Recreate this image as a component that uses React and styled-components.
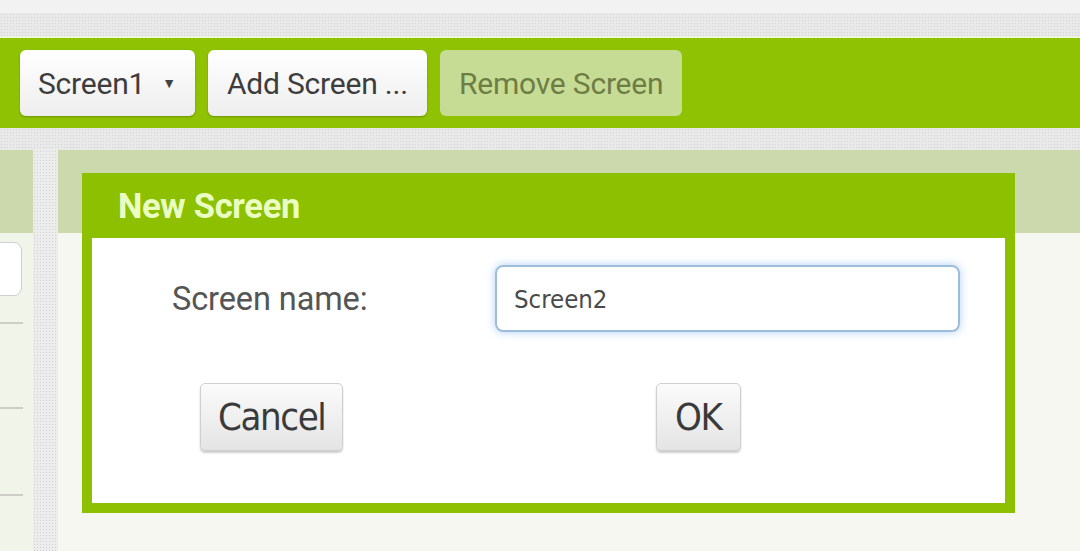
import React from 'react'
import styled, { createGlobalStyle } from 'styled-components'

const GlobalStyle = createGlobalStyle`
  html, body {
    margin: 0;
    padding: 0;
    width: 1080px;
    height: 551px;
    overflow: hidden;
    background: #f2f2f2;
    font-family: Roboto, "Noto Sans", sans-serif;
  }
`

const dots = `
  background-color: #e9e9e9;
  background-image: radial-gradient(#d2d2d2 0.8px, transparent 1px);
  background-size: 3px 3px;
`

const Page = styled.div`
  width: 1080px;
  height: 551px;
  display: flex;
  flex-direction: column;
`

const TopStrip = styled.div`
  height: 13px;
  background: #f2f2f2;
`

const DottedBand = styled.div`
  ${dots}
  height: ${({ h }) => h}px;
  border-bottom: ${({ edge }) => (edge ? '2px solid #eef7dc' : 'none')};
`

const Toolbar = styled.div`
  height: 90px;
  background: #8fc202;
  display: flex;
  align-items: center;
  gap: 13px;
  padding: 0 20px;
  box-sizing: border-box;
`

const ToolButton = styled.div`
  height: 66px;
  box-sizing: border-box;
  display: flex;
  align-items: center;
  gap: 17px;
  padding: 0 ${({ pr = 19 }) => pr}px 0 ${({ pl = 19 }) => pl}px;
  border-radius: 6px;
  font-size: 30px;
  letter-spacing: -0.2px;
  color: ${({ disabled }) => (disabled ? '#6e7d45' : '#3d3d3d')};
  background: ${({ disabled }) =>
    disabled ? '#c6dc94' : 'linear-gradient(#ffffff, #eeeeee)'};
  box-shadow: ${({ disabled }) =>
    disabled ? 'none' : '0 1px 2px rgba(0,0,0,0.25)'};
`

const Caret = styled.span`
  font-size: 14px;
  color: #444;
`

const Main = styled.div`
  flex: 1;
  display: flex;
  min-height: 0;
`

const LeftPanel = styled.div`
  width: 33px;
  display: flex;
  flex-direction: column;
  background: #f1f4e9;
`

const PanelHead = styled.div`
  height: 83px;
  background: #cbd9ad;
  flex-shrink: 0;
`

const LeftBox = styled.div`
  height: 52px;
  margin: 9px 11px 0 -10px;
  border: 1px solid #cfcfcf;
  border-radius: 8px;
  background: #fff;
  flex-shrink: 0;
`

const LeftRow = styled.div`
  height: ${({ h }) => h}px;
  flex-shrink: 0;
  border-bottom: 2px solid #cdcfc6;
  margin-right: 10px;
`

const Divider = styled.div`
  ${dots}
  width: 25px;
  background-color: #ececec;
`

const Workspace = styled.div`
  flex: 1;
  position: relative;
  display: flex;
  flex-direction: column;
  background: #f7f7f2;
`

const Dialog = styled.div`
  position: absolute;
  left: 24px;
  top: 23px;
  width: 933px;
  height: 340px;
  box-sizing: border-box;
  background: #8dc000;
  padding: 0 10px 10px 10px;
  display: flex;
  flex-direction: column;
`

const DialogTitle = styled.div`
  height: 65px;
  display: flex;
  align-items: center;
  padding-left: 26px;
  font-size: 34.5px;
  font-weight: 700;
  color: #eaffc4;
  letter-spacing: -0.3px;
`

const DialogBody = styled.div`
  flex: 1;
  background: #ffffff;
  display: grid;
  grid-template-columns: 403px 465px;
  grid-template-rows: 67px 68px;
  row-gap: 51px;
  padding: 27px 0 0 0;
  align-items: center;
`

const Label = styled.div`
  padding-left: 80px;
  font-size: 32.5px;
  color: #555;
  letter-spacing: -0.1px;
`

const NameInput = styled.div`
  height: 67px;
  box-sizing: border-box;
  border: 2px solid #9dbddd;
  border-radius: 8px;
  box-shadow: 0 0 9px rgba(110, 170, 235, 0.55);
  display: flex;
  align-items: center;
  padding-left: 17px;
  font-family: "DejaVu Sans Condensed", "DejaVu Sans", sans-serif;
  font-size: 25.5px;
  color: #4a4a4a;
  letter-spacing: 0;
`

const DialogButton = styled.div`
  justify-self: start;
  margin-left: ${({ shift }) => shift}px;
  height: 68px;
  box-sizing: border-box;
  padding: 0 ${({ pad }) => pad}px;
  display: flex;
  align-items: center;
  border: 1px solid #cfcfcf;
  border-radius: 5px;
  background: linear-gradient(#fbfbfb, #e4e4e4);
  box-shadow: 0 2px 2px rgba(0, 0, 0, 0.2);
  font-family: "DejaVu Sans Condensed", "DejaVu Sans", sans-serif;
  font-size: 38px;
  color: #3a3a3a;
  letter-spacing: -1.4px;
`

export default function App() {
  return (
    <Page>
      <GlobalStyle />
      <TopStrip />
      <DottedBand h={23} edge />
      <Toolbar>
        <ToolButton pl={18} pr={19}>
          Screen1 <Caret>▼</Caret>
        </ToolButton>
        <ToolButton>Add Screen ...</ToolButton>
        <ToolButton disabled>Remove Screen</ToolButton>
      </Toolbar>
      <DottedBand h={22} />
      <Main>
        <LeftPanel>
          <PanelHead />
          <LeftBox />
          <LeftRow h={26} />
          <LeftRow h={83} />
          <LeftRow h={85} />
        </LeftPanel>
        <Divider />
        <Workspace>
          <PanelHead />
          <Dialog>
            <DialogTitle>New Screen</DialogTitle>
            <DialogBody>
              <Label>Screen name:</Label>
              <NameInput>Screen2</NameInput>
              <DialogButton shift={108} pad={17}>Cancel</DialogButton>
              <DialogButton shift={161} pad={18}>OK</DialogButton>
            </DialogBody>
          </Dialog>
        </Workspace>
      </Main>
    </Page>
  )
}
